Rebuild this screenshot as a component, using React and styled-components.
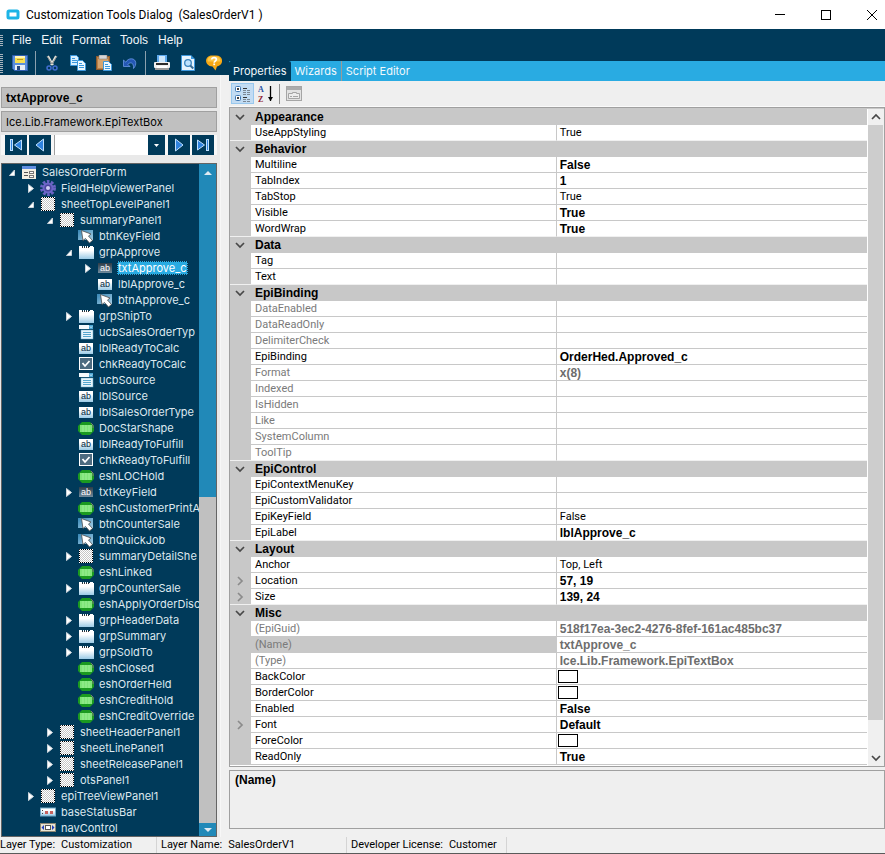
import React from 'react';
import styled, { createGlobalStyle } from 'styled-components';

const GlobalStyle = createGlobalStyle`
  * {
    box-sizing: border-box;
  }

  body {
    margin: 0;
    background: #f0f0f0;
    font-family: 'Liberation Sans', Arial, sans-serif;
    font-size: 12px;
    color: #000;
  }

  button, input, select {
    font: inherit;
    color: inherit;
    margin: 0;
    padding: 0;
    border: none;
    border-radius: 0;
    background: none;
  }

  svg {
    display: block;
    flex-shrink: 0;
  }
`;

const Window = styled.div`
  min-height: 100vh;
  display: flex;
  flex-direction: column;
`;

const TitleBar = styled.header`
  height: 29px;
  display: flex;
  align-items: center;
  background: #fff;
  padding-left: 6px;
`;

const WindowTitle = styled.h1`
  margin: 0 0 0 6px;
  flex: 1;
  font-family: Roboto, 'Open Sans', sans-serif;
  font-size: 12px;
  line-height: 16px;
  font-weight: 400;
  white-space: pre;
`;

const WindowButton = styled.button`
  width: 46px;
  height: 28px;
  display: flex;
  align-items: center;
  justify-content: center;

  &:last-child {
    width: 36px;
    justify-content: flex-end;
    padding-right: 8px;
  }
`;

const Grip = styled.span`
  width: 3px;
  height: ${({ $height }) => $height}px;
  background: repeating-linear-gradient(#a9b4bd 0 1px, #003a5a 1px 2px);
`;

const MenuBar = styled.nav`
  height: 22px;
  display: flex;
  align-items: center;
  background: #003a5a;
  color: #f2f6f9;
`;

const MenuButtons = styled.div`
  display: flex;
  margin-left: 4px;
`;

const MenuButton = styled.button`
  padding: 0 5px;
  line-height: 20px;
`;

const Body = styled.div`
  flex: 1;
  display: flex;
`;

const SideColumn = styled.div`
  width: 229px;
  flex-shrink: 0;
  display: flex;
  flex-direction: column;
`;

const ToolBar = styled.div`
  height: 24px;
  display: flex;
  align-items: center;
  background: #003a5a;
`;

const ToolButtons = styled.div`
  display: flex;
  align-items: center;
  margin-left: 4px;
`;

const ToolButton = styled.button`
  width: 26px;
  height: 22px;
  display: flex;
  align-items: center;
  justify-content: center;
`;

const ToolDivider = styled.span`
  width: 1px;
  height: 24px;
  margin: 0 3px 0 2px;
  background: #8ba0ae;
`;

const SideBody = styled.div`
  flex: 1;
  display: flex;
  background: #e9e9e9;
`;

const ControlPanel = styled.aside`
  flex: 1;
  min-width: 0;
  display: flex;
  flex-direction: column;
  padding: 12px 3px 0 1px;
`;

const Splitter = styled.div`
  width: 9px;
  background: #f0f0f0;
  border-left: 1px solid #f7f7f7;
`;

const ControlField = styled.input`
  width: 100%;
  height: 21px;
  margin-bottom: 3px;
  padding: 0 4px;
  border: 1px solid #a0a0a0;
  background: #c0c0c0;
  font-family: ${({ $strong }) => ($strong ? "'Liberation Sans'" : 'Inter')}, sans-serif;
  font-weight: ${({ $strong }) => ($strong ? 700 : 400)};
  font-size: ${({ $strong }) => ($strong ? 12 : 11)}px;
`;

const Navigator = styled.div`
  height: 20px;
  display: flex;
  gap: 2px;
  padding: 0 3px 0 4px;
  background: #f7f7f7;
`;

const NavButton = styled.button`
  width: 22px;
  height: 20px;
  display: flex;
  align-items: center;
  justify-content: center;
  background: #003a5a;
`;

const RecordPicker = styled.div`
  flex: 1;
  min-width: 0;
  display: flex;
  margin: 0 1px;
  background: #fff;
  border-left: 1px solid #a0a0a0;
`;

const RecordSelect = styled.select`
  flex: 1;
  min-width: 0;
  appearance: none;
  padding: 0 2px;
`;

const PickerButton = styled(NavButton)`
  width: 17px;
`;

const TreeFrame = styled.div`
  flex: 1;
  display: flex;
  margin-top: 8px;
  border: 1px solid #646464;
  background: #003a5a;
`;

const Tree = styled.ul`
  flex: 1;
  min-width: 0;
  margin: 0;
  padding: 0;
  list-style: none;
  overflow: hidden;
`;

const TreeItem = styled.li`
  height: 16px;
  display: flex;
  align-items: center;
  padding-left: ${({ $level }) => 5 + $level * 19}px;
  font-family: Inter, 'Liberation Sans', sans-serif;
  font-size: 11px;
  line-height: 14px;
  color: #dde8ef;
  white-space: nowrap;
`;

const Expander = styled.span`
  width: 14px;
  flex-shrink: 0;
  display: flex;
`;

const TreeLabel = styled.span`
  margin-left: 4px;
  padding: 0 1px;
  height: 14px;
  background: ${({ $selected }) => ($selected ? '#29abe2' : 'transparent')};
  outline: ${({ $selected }) => ($selected ? '1px dotted #0c2c40' : 'none')};
  outline-offset: -1px;
  color: ${({ $selected }) => ($selected ? '#fff' : 'inherit')};
`;

const TreeScroll = styled.div`
  width: 17px;
  flex-shrink: 0;
  display: flex;
  flex-direction: column;
  background: #c0c0c0;
`;

const TreeScrollButton = styled.button`
  height: ${({ $height }) => $height}px;
  display: flex;
  align-items: center;
  justify-content: center;
  background: #2189b8;
`;

const TreeThumb = styled.div`
  height: 47%;
  background: #2189b8;
`;

const TreeTrack = styled.div`
  flex: 1;
`;

const MainColumn = styled.main`
  flex: 1;
  min-width: 0;
  display: flex;
  flex-direction: column;
`;

const TabBar = styled.div`
  height: 30px;
  display: flex;
  padding-top: 10px;
  background: #003a5a;
`;

const Tabs = styled.div`
  flex: 1;
  display: flex;
  align-items: center;
  background: #29abe2;
  font-family: Inter, 'Liberation Sans', sans-serif;
  font-size: 11px;
`;

const Tab = styled.button`
  height: 20px;
  padding: 0 4px;
  color: #f2f8fc;
  background: ${({ $active }) => ($active ? '#003a5a' : 'transparent')};
  border-left: ${({ $divided }) => ($divided ? '1px solid #9b9a98' : 'none')};
  border-radius: ${({ $active }) => ($active ? '2px 2px 0 0' : '0')};
`;

const GridTools = styled.div`
  height: 26px;
  display: flex;
  align-items: center;
  padding-left: 2px;
  background: #efefef;
  border-bottom: 1px solid #fafafa;
`;

const GridToolButton = styled.button`
  width: 23px;
  height: 21px;
  display: flex;
  align-items: center;
  justify-content: center;
  background: ${({ $active }) => ($active ? '#c2dcf3' : 'transparent')};
  border: 1px solid ${({ $active }) => ($active ? '#98c8ee' : 'transparent')};
`;

const GridDivider = styled.span`
  width: 1px;
  height: 20px;
  margin: 0 2px;
  background: #8f8f8f;
`;

const GridFrame = styled.section`
  display: flex;
  padding-top: 1px;
  border: 1px solid #a0a0a0;
  background: linear-gradient(#c8c8c8 0 1px, #fff 1px);
`;

const PropertyTable = styled.table`
  flex: 1;
  min-width: 0;
  margin-bottom: 1px;
  table-layout: fixed;
  border-collapse: separate;
  border-spacing: 0;
  font-size: 11px;
  line-height: 14px;
`;

const GutterColumn = styled.col`
  width: 21px;
`;

const NameColumn = styled.col`
  width: 48%;
`;

const GutterCell = styled.td`
  height: 16px;
  padding: 0 0 0 5px;
  background: #c8c8c8;
  border-bottom: 1px solid ${({ $last }) => ($last ? '#f0f0f0' : '#c8c8c8')};
`;

const CategoryCell = styled.th`
  height: 16px;
  padding: 1px 4px 0;
  text-align: left;
  font-size: 12px;
  background: #c8c8c8;
  border-bottom: 1px solid #c8c8c8;
`;

const NameCell = styled.th`
  height: 16px;
  padding: 1px 4px 0;
  text-align: left;
  font-family: Roboto, 'Liberation Sans', sans-serif;
  font-weight: 400;
  color: ${({ $dim }) => ($dim ? '#7a7a7a' : '#000')};
  background: ${({ $selected }) => ($selected ? '#c8c8c8' : '#fff')};
  border-right: 1px solid #c8c8c8;
  border-bottom: 1px solid ${({ $last }) => ($last ? '#f0f0f0' : '#c8c8c8')};
  white-space: nowrap;
`;

const ValueCell = styled.td`
  height: 16px;
  padding: ${({ $swatch }) => ($swatch ? 0 : 1)}px 3px 0;
  font-family: ${({ $bold }) => ($bold ? "'Liberation Sans'" : 'Roboto')}, sans-serif;
  font-weight: ${({ $bold }) => ($bold ? 700 : 400)};
  font-size: ${({ $bold }) => ($bold ? 12 : 11)}px;
  color: ${({ $dim }) => ($dim ? '#6d6d6d' : '#000')};
  background: #fff;
  border-bottom: 1px solid ${({ $last }) => ($last ? '#f0f0f0' : '#c8c8c8')};
  white-space: nowrap;
`;

const Swatch = styled.span`
  display: block;
  width: 20px;
  height: 13px;
  margin-left: -2px;
  border: 1px solid #000;
  background: #fff;
`;

const GridScroll = styled.div`
  width: 16px;
  flex-shrink: 0;
  display: flex;
  flex-direction: column;
  margin-left: 1px;
  background: #f0f0f0;
`;

const GridScrollButton = styled.button`
  height: 16px;
  display: flex;
  align-items: center;
  justify-content: center;
`;

const GridThumb = styled.div`
  height: 595px;
  margin-right: 1px;
  background: #cdcdcd;
`;

const GridTrack = styled.div`
  flex: 1;
`;

const HelpPane = styled.section`
  min-height: 59px;
  margin: 3px 0 8px;
  padding: 2px 5px;
  border: 1px solid #a0a0a0;
  background: #efefef;
`;

const HelpTitle = styled.h2`
  margin: 0;
  font-size: 12px;
  line-height: 15px;
`;

const StatusBar = styled.footer`
  height: 17px;
  display: flex;
  background: #f0f0f0;
  border-bottom: 1px solid #5a5a5a;
  font-family: Roboto, 'Liberation Sans', sans-serif;
  font-size: 11px;
  line-height: 16px;
`;

const StatusItem = styled.div`
  display: flex;
  gap: 6px;
  min-width: ${({ $width }) => $width}px;
  border-right: 1px solid #d4d4d4;
  padding-left: ${({ $first }) => ($first ? 0 : 4)}px;
  white-space: nowrap;
`;

/* Toolbar icons */

const AppIcon = () => (
  <svg width="14" height="11" viewBox="0 0 14 11">
    <rect x="2" y="2" width="10" height="7" rx="1" fill="#fff" stroke="#1cb4e6" strokeWidth="3" />
  </svg>
);

const SaveIcon = () => (
  <svg width="16" height="16" viewBox="0 0 16 16">
    <path d="M0.5 0.5h15v15h-13l-2-2z" fill="#5b8fdc" stroke="#2f5fb0" />
    <rect x="3" y="1" width="10" height="7" fill="#f6df55" />
    <rect x="3" y="1" width="10" height="2" fill="#fff6b8" />
    <rect x="5" y="4" width="6" height="1" fill="#b99a20" />
    <rect x="3" y="10" width="10" height="5" fill="#e9eef7" />
    <rect x="5" y="11" width="3" height="4" fill="#24477f" />
  </svg>
);

const CutIcon = () => (
  <svg width="14" height="16" viewBox="0 0 14 16" fill="none">
    <path d="M3 1l5 9M11 1L6 10" stroke="#e4e4dc" strokeWidth="2" />
    <path d="M2 1l5 8M12 1L7 9" stroke="#8d8f8d" />
    <circle cx="4" cy="13" r="2" stroke="#3f6ed0" strokeWidth="1.5" />
    <circle cx="10" cy="13" r="2" stroke="#3f6ed0" strokeWidth="1.5" />
  </svg>
);

const CopyIcon = () => (
  <svg width="16" height="16" viewBox="0 0 16 16">
    <path d="M0.5 0.5h6l2 2v8h-8z" fill="#d8efff" stroke="#3b97dd" />
    <path d="M2 3.5h3M2 5.5h5M2 7.5h5" stroke="#3b97dd" />
    <path d="M7.5 5.5h5l3 3v7h-8z" fill="#eef8ff" stroke="#3b97dd" />
    <path d="M9 8.5h3M9 10.5h5M9 12.5h5" stroke="#3b97dd" />
  </svg>
);

const PasteIcon = () => (
  <svg width="16" height="16" viewBox="0 0 16 16">
    <rect x="0.5" y="1.5" width="13" height="13" fill="#b98048" stroke="#8d5a2c" />
    <rect x="2" y="4" width="10" height="9" fill="#d4a470" />
    <rect x="3" y="0" width="8" height="4" fill="#d7d7d7" stroke="#777" strokeWidth="0.5" />
    <path d="M7.5 6.5h5l3 3v6h-8z" fill="#eef8ff" stroke="#3b97dd" />
    <path d="M9 9.5h3M9 11.5h5M9 13.5h5" stroke="#3b97dd" />
  </svg>
);

const UndoIcon = () => (
  <svg width="14" height="13" viewBox="0 0 14 13">
    <path d="M0.5 3v6.5H7L4.8 7.300C7 5 11 5 10.500 11.500 14 8 13.500 2 8.500 1.800 6 1.700 4 3 2.800 5.200z" fill="#2457b5" stroke="#6a98e6" strokeWidth="0.8" />
  </svg>
);

const PrintIcon = () => (
  <svg width="16" height="16" viewBox="0 0 16 16">
    <path d="M3 0h10v8H3z" fill="#5ea9ec" />
    <path d="M5 1h6v7H5z" fill="#cfe8fc" />
    <rect x="0" y="7" width="16" height="6" rx="1" fill="#f0f0f0" />
    <rect x="2" y="8" width="12" height="2" fill="#2b2b2b" />
    <rect x="1" y="13" width="14" height="2" fill="#9a9a9a" />
    <rect x="3" y="11" width="10" height="2" fill="#fff" />
  </svg>
);

const PreviewIcon = () => (
  <svg width="14" height="16" viewBox="0 0 14 16">
    <path d="M0.5 0.5h9l4 4v11h-13z" fill="#e6f4ff" stroke="#3b97dd" />
    <path d="M10 0v4h4z" fill="#3b97dd" />
    <circle cx="7" cy="8" r="3.3" fill="#bfe3ff" stroke="#3a83bd" strokeWidth="1.3" />
    <path d="M9.3 10.5l3 3" stroke="#3b6f98" strokeWidth="2" />
  </svg>
);

const HelpIcon = () => (
  <svg width="16" height="16" viewBox="0 0 16 16">
    <path d="M6 0.5h4c8 0 8 10 1 11L9.5 15.500 6.500 11.500C-2 11.500-2 0.500 6 0.500z" fill="#f6a814" />
    <path d="M6 1.500h4c4 0 5 4 4 5H2c-1-2 0-5 4-5z" fill="#fcc84a" />
    <path d="M5.700 4.500c0-2.500 4.700-2.500 4.700 0 0 1.500-2.200 1.500-2.200 3.200" fill="none" stroke="#fff" strokeWidth="1.7" />
    <rect x="7.3" y="8.500" width="1.8" height="1.7" fill="#fff" />
  </svg>
);

const Arrow = ({ flip, bar }) => (
  <svg width="14" height="14" viewBox="0 0 14 14">
    <g transform={flip ? 'translate(14 0) scale(-1 1)' : undefined}>
      {bar && <rect x="1.5" y="1.5" width="2" height="11" fill="#2f83e0" stroke="#bfe0ff" />}
      <path d={bar ? 'M12.5 2v10L5.5 7z' : 'M10.5 1v12L3 7z'} fill="#2f83e0" stroke="#bfe0ff" />
    </g>
  </svg>
);

const SmallTriangle = ({ up }) => (
  <svg width="8" height="4" viewBox="0 0 8 4">
    <path d={up ? 'M0 4h8L4 0z' : 'M0 0h8L4 4z'} fill="#dfeaf2" />
  </svg>
);

const Chevron = ({ dir }) => {
  const paths = {
    down: 'M1 3l4 4 4-4',
    up: 'M1 7l4-4 4 4',
    right: 'M3 1l4 4-4 4'
  };
  return (
    <svg width="10" height="10" viewBox="0 0 10 10">
      <path d={paths[dir]} fill="none" stroke={dir === 'right' ? '#8b8b8b' : '#484848'} strokeWidth="1.7" />
    </svg>
  );
};

const CategorizedIcon = () => (
  <svg width="16" height="16" viewBox="0 0 16 16" fill="none">
    <rect x="0.5" y="0.5" width="5" height="5" rx="1" fill="#fff" stroke="#3f78b5" />
    <path d="M2 3h2M3 2v2" stroke="#000" />
    <rect x="0.5" y="9.5" width="5" height="5" rx="1" fill="#fff" stroke="#3f78b5" />
    <path d="M2 12h2M3 11v2" stroke="#000" />
    <path d="M8 2.5h4M8 11.5h4" stroke="#333" />
    <path d="M8 4.5h3M12 4.5h3M8 6.5h3M12 6.5h3M8 8.5h3M12 8.5h3M8 13.5h3M12 13.5h3M8 15.5h3M12 15.5h3" stroke="#7b8794" />
  </svg>
);

const SortIcon = () => (
  <svg width="16" height="18" viewBox="0 0 16 18">
    <text x="0" y="7" fontSize="8" fontWeight="700" fontFamily="Liberation Serif, serif" fill="#2850a4">A</text>
    <text x="0" y="17" fontSize="8" fontWeight="700" fontFamily="Liberation Serif, serif" fill="#8f2533">Z</text>
    <path d="M12.5 1v15" stroke="#000" strokeWidth="1.3" />
    <path d="M10 12h5l-2.500 4z" fill="#000" />
  </svg>
);

const PagesIcon = () => (
  <svg width="16" height="15" viewBox="0 0 16 15" fill="none">
    <rect x="0.5" y="0.5" width="15" height="14" fill="#e2e2e2" stroke="#a5a5a5" />
    <rect x="1" y="1" width="14" height="3" fill="#ababab" />
    <path d="M2.500 12.500v-5h4v-1h4v1h3v5z" fill="#ececec" stroke="#a5a5a5" />
    <path d="M4 10.500h2M7 10.500h5" stroke="#a5a5a5" />
  </svg>
);

/* Tree icons, one per control type */

const Defs = () => (
  <svg width="0" height="0" aria-hidden="true">
    <defs>
      <pattern id="checker" width="2" height="2" patternUnits="userSpaceOnUse">
        <rect width="2" height="2" fill="#fff" />
        <rect width="1" height="1" fill="#c6c6c6" />
        <rect x="1" y="1" width="1" height="1" fill="#c6c6c6" />
      </pattern>
      <linearGradient id="paper" x1="0" y1="0" x2="0" y2="1">
        <stop offset="0.3" stopColor="#fff" />
        <stop offset="1" stopColor="#9bcbe6" />
      </linearGradient>
      <linearGradient id="steel" x1="0" y1="0" x2="0" y2="1">
        <stop offset="0" stopColor="#2d3c48" />
        <stop offset="1" stopColor="#6f8b9d" />
      </linearGradient>
      <linearGradient id="sky" x1="0" y1="0" x2="1" y2="1">
        <stop offset="0" stopColor="#3585b5" />
        <stop offset="1" stopColor="#a9d0e6" />
      </linearGradient>
    </defs>
  </svg>
);

const drawings = {
  form: (
    <>
      <rect x="1" y="2" width="14" height="13" fill="#f3efe2" />
      <rect x="1" y="2" width="14" height="3" fill="#5f8de0" />
      <path d="M3 8.5h4M3 11.5h4" stroke="#555" />
      <rect x="8.5" y="7.5" width="4" height="2" fill="#fff" stroke="#777" />
      <rect x="8.5" y="11.5" width="4" height="2" fill="#fff" stroke="#777" />
    </>
  ),
  gear: (
    <>
      <circle cx="8" cy="8" r="6.5" fill="none" stroke="#6a63c4" strokeWidth="3" strokeDasharray="2.6 1.5" />
      <circle cx="8" cy="8" r="5.5" fill="#6d67c9" />
      <circle cx="8" cy="8" r="3.5" fill="#4c469e" />
      <circle cx="8" cy="8" r="2" fill="#cfcdf5" />
    </>
  ),
  panel: (
    <>
      <rect x="1" y="1" width="14" height="14" fill="url(#checker)" />
      <rect x="1.5" y="1.5" width="13" height="13" fill="none" stroke="#000" strokeDasharray="1 1" strokeDashoffset="0.5" />
    </>
  ),
  button: (
    <>
      <rect x="0" y="2" width="15" height="10" fill="url(#sky)" />
      <path d="M3.5 2.5l1.5 10 2.500-2 4 4.500 3-2.500-4-4.500 2.500-2z" fill="#fff" stroke="#4b4b4b" strokeWidth="0.8" />
    </>
  ),
  group: (
    <>
      <path d="M1 3h15v12H1z" fill="url(#paper)" />
      <path d="M1 2.500h3M5 2.500h1M7 2.500h1M9 2.500h1M12 2.500h3" stroke="#fff" />
      <path d="M4 3.500h1M6 3.500h1M8 3.500h1M10 3.500h1" stroke="#333" />
    </>
  ),
  text: (
    <>
      <rect x="1" y="3" width="14" height="10" fill="url(#steel)" />
      <text x="3" y="11" fontSize="9" fontFamily="Liberation Sans, sans-serif" fill="#fff">ab</text>
    </>
  ),
  label: (
    <>
      <rect x="1" y="3" width="14" height="11" fill="url(#paper)" />
      <text x="3" y="11" fontSize="9" fontFamily="Liberation Sans, sans-serif" fill="#06293f">ab</text>
    </>
  ),
  combo: (
    <>
      <rect x="1" y="1" width="14" height="4" fill="#f4fafd" />
      <rect x="11" y="1" width="4" height="4" fill="#4ba6d4" />
      <path d="M12 2.500l1 1 1-1" stroke="#fff" fill="none" />
      <rect x="3" y="6" width="12" height="9" fill="#e8f5fb" stroke="#65aed0" strokeWidth="0.5" />
      <path d="M5 8.500h8M5 10.500h8M5 12.500h8" stroke="#55a7ce" />
    </>
  ),
  check: (
    <>
      <rect x="1.5" y="1.5" width="13" height="12" fill="#4d6b80" stroke="#fff" />
      <path d="M4.500 7l2.500 3 4.500-5" stroke="#fff" strokeWidth="1.8" fill="none" />
    </>
  ),
  shape: (
    <>
      <path d="M4 2h8l4 4v5l-4 4H4l-4-4V6z" fill="#1b9a20" />
      <rect x="2" y="5" width="12" height="7" fill="#7de477" />
      <path d="M5 5v7M8 5v7M11 5v7" stroke="#9df096" />
      <path d="M13 3l2 2v3" stroke="#777" fill="none" />
    </>
  ),
  status: (
    <>
      <rect x="0.5" y="4" width="15" height="8" fill="url(#paper)" stroke="#6fa9c8" />
      <path d="M2.500 6v1M2.500 9v1" stroke="#444" />
      <rect x="5" y="7" width="3" height="3" fill="#c8625e" />
      <rect x="10" y="7" width="3" height="3" fill="#c8625e" />
    </>
  ),
  navigator: (
    <>
      <rect x="0.5" y="3.5" width="15" height="8" fill="#e9e4d2" stroke="#8c8774" />
      <path d="M4 5v5L1.500 7.500zM12 5v5l2.500-2.500z" fill="#1e3fc0" />
      <rect x="5.5" y="5.500" width="5" height="4" fill="#fff" stroke="#555" />
    </>
  )
};

const TreeIcon = ({ type }) => (
  <svg width="16" height="16" viewBox="0 0 16 16">{drawings[type]}</svg>
);

const ExpandMark = ({ open }) => (
  <svg width="9" height="9" viewBox="0 0 9 9">
    {open ? (
      <path d="M7.500 2v5.500h-5z" fill="#fff" stroke="#c9d3da" />
    ) : (
      <path d="M2.500 0.500v8l5-4z" fill="#fff" stroke="#c9d3da" />
    )}
  </svg>
);

const menus = ['File', 'Edit', 'Format', 'Tools', 'Help'];

const toolGroups = [
  [['Save', SaveIcon]],
  [['Cut', CutIcon], ['Copy', CopyIcon], ['Paste', PasteIcon], ['Undo', UndoIcon]],
  [['Print', PrintIcon], ['Print Preview', PreviewIcon], ['Help', HelpIcon]]
];

// level, icon, name, state of the expander
const treeItems = [
  [0, 'form', 'SalesOrderForm', 'open'],
  [1, 'gear', 'FieldHelpViewerPanel', 'closed'],
  [1, 'panel', 'sheetTopLevelPanel1', 'open'],
  [2, 'panel', 'summaryPanel1', 'open'],
  [3, 'button', 'btnKeyField'],
  [3, 'group', 'grpApprove', 'open'],
  [4, 'text', 'txtApprove_c', 'closed'],
  [4, 'label', 'lblApprove_c'],
  [4, 'button', 'btnApprove_c'],
  [3, 'group', 'grpShipTo', 'closed'],
  [3, 'combo', 'ucbSalesOrderTyp'],
  [3, 'label', 'lblReadyToCalc'],
  [3, 'check', 'chkReadyToCalc'],
  [3, 'combo', 'ucbSource'],
  [3, 'label', 'lblSource'],
  [3, 'label', 'lblSalesOrderType'],
  [3, 'shape', 'DocStarShape'],
  [3, 'label', 'lblReadyToFulfill'],
  [3, 'check', 'chkReadyToFulfill'],
  [3, 'shape', 'eshLOCHold'],
  [3, 'text', 'txtKeyField', 'closed'],
  [3, 'shape', 'eshCustomerPrintA'],
  [3, 'button', 'btnCounterSale'],
  [3, 'button', 'btnQuickJob'],
  [3, 'panel', 'summaryDetailShe', 'closed'],
  [3, 'shape', 'eshLinked'],
  [3, 'group', 'grpCounterSale', 'closed'],
  [3, 'shape', 'eshApplyOrderDisc'],
  [3, 'group', 'grpHeaderData', 'closed'],
  [3, 'group', 'grpSummary', 'closed'],
  [3, 'group', 'grpSoldTo', 'closed'],
  [3, 'shape', 'eshClosed'],
  [3, 'shape', 'eshOrderHeld'],
  [3, 'shape', 'eshCreditHold'],
  [3, 'shape', 'eshCreditOverride'],
  [2, 'panel', 'sheetHeaderPanel1', 'closed'],
  [2, 'panel', 'sheetLinePanel1', 'closed'],
  [2, 'panel', 'sheetReleasePanel1', 'closed'],
  [2, 'panel', 'otsPanel1', 'closed'],
  [1, 'panel', 'epiTreeViewPanel1', 'closed'],
  [1, 'status', 'baseStatusBar'],
  [1, 'navigator', 'navControl']
];

const categories = [
  {
    name: 'Appearance',
    rows: [{ name: 'UseAppStyling', value: 'True' }]
  },
  {
    name: 'Behavior',
    rows: [
      { name: 'Multiline', value: 'False', bold: true },
      { name: 'TabIndex', value: '1', bold: true },
      { name: 'TabStop', value: 'True' },
      { name: 'Visible', value: 'True', bold: true },
      { name: 'WordWrap', value: 'True', bold: true }
    ]
  },
  {
    name: 'Data',
    rows: [{ name: 'Tag' }, { name: 'Text' }]
  },
  {
    name: 'EpiBinding',
    rows: [
      { name: 'DataEnabled', dim: true },
      { name: 'DataReadOnly', dim: true },
      { name: 'DelimiterCheck', dim: true },
      { name: 'EpiBinding', value: 'OrderHed.Approved_c', bold: true },
      { name: 'Format', value: 'x(8)', bold: true, dim: true },
      { name: 'Indexed', dim: true },
      { name: 'IsHidden', dim: true },
      { name: 'Like', dim: true },
      { name: 'SystemColumn', dim: true },
      { name: 'ToolTip', dim: true }
    ]
  },
  {
    name: 'EpiControl',
    rows: [
      { name: 'EpiContextMenuKey' },
      { name: 'EpiCustomValidator' },
      { name: 'EpiKeyField', value: 'False' },
      { name: 'EpiLabel', value: 'lblApprove_c', bold: true }
    ]
  },
  {
    name: 'Layout',
    rows: [
      { name: 'Anchor', value: 'Top, Left' },
      { name: 'Location', value: '57, 19', bold: true, expandable: true },
      { name: 'Size', value: '139, 24', bold: true, expandable: true }
    ]
  },
  {
    name: 'Misc',
    rows: [
      { name: '(EpiGuid)', value: '518f17ea-3ec2-4276-8fef-161ac485bc37', bold: true, dim: true },
      { name: '(Name)', value: 'txtApprove_c', bold: true, dim: true, selected: true },
      { name: '(Type)', value: 'Ice.Lib.Framework.EpiTextBox', bold: true, dim: true },
      { name: 'BackColor', swatch: true },
      { name: 'BorderColor', swatch: true },
      { name: 'Enabled', value: 'False', bold: true },
      { name: 'Font', value: 'Default', bold: true, expandable: true },
      { name: 'ForeColor', swatch: true },
      { name: 'ReadOnly', value: 'True', bold: true }
    ]
  }
];

const PropertyRow = ({ row, last }) => (
  <tr>
    <GutterCell $last={last}>{row.expandable && <Chevron dir="right" />}</GutterCell>
    <NameCell scope="row" $dim={row.dim} $selected={row.selected} $last={last}>
      {row.name}
    </NameCell>
    <ValueCell $bold={row.bold} $dim={row.dim} $swatch={row.swatch} $last={last}>
      {row.swatch ? <Swatch /> : row.value}
    </ValueCell>
  </tr>
);

const PropertyGrid = () => (
  <GridFrame>
    <PropertyTable>
      <colgroup>
        <GutterColumn />
        <NameColumn />
        <col />
      </colgroup>
      {categories.map((category, index) => (
        <tbody key={category.name}>
          <tr>
            <GutterCell><Chevron dir="down" /></GutterCell>
            <CategoryCell colSpan={2}>{category.name}</CategoryCell>
          </tr>
          {category.rows.map((row, i) => (
            <PropertyRow
              key={row.name}
              row={row}
              last={i === category.rows.length - 1 && index < categories.length - 1}
            />
          ))}
        </tbody>
      ))}
    </PropertyTable>
    <GridScroll>
      <GridScrollButton aria-label="Scroll up"><Chevron dir="up" /></GridScrollButton>
      <GridThumb />
      <GridTrack />
      <GridScrollButton aria-label="Scroll down"><Chevron dir="down" /></GridScrollButton>
    </GridScroll>
  </GridFrame>
);

const ControlTree = () => (
  <TreeFrame>
    <Tree>
      {treeItems.map(([level, icon, name, state]) => (
        <TreeItem key={name} $level={level}>
          <Expander>{state && <ExpandMark open={state === 'open'} />}</Expander>
          <TreeIcon type={icon} />
          <TreeLabel $selected={name === 'txtApprove_c'}>{name}</TreeLabel>
        </TreeItem>
      ))}
    </Tree>
    <TreeScroll>
      <TreeScrollButton $height={17} aria-label="Scroll up"><SmallTriangle up /></TreeScrollButton>
      <TreeThumb />
      <TreeTrack />
      <TreeScrollButton $height={13} aria-label="Scroll down"><SmallTriangle /></TreeScrollButton>
    </TreeScroll>
  </TreeFrame>
);

const App = () => (
  <Window>
    <GlobalStyle />
    <TitleBar>
      <AppIcon />
      <WindowTitle>{'Customization Tools Dialog  (SalesOrderV1 )'}</WindowTitle>
      <WindowButton aria-label="Minimize">
        <svg width="10" height="10" viewBox="0 0 10 10"><path d="M0 4.500h10" stroke="#000" /></svg>
      </WindowButton>
      <WindowButton aria-label="Maximize">
        <svg width="10" height="10" viewBox="0 0 10 10"><rect x="0.5" y="0.5" width="9" height="9" fill="none" stroke="#000" /></svg>
      </WindowButton>
      <WindowButton aria-label="Close">
        <svg width="10" height="10" viewBox="0 0 10 10"><path d="M0 0l10 10M10 0L0 10" stroke="#000" /></svg>
      </WindowButton>
    </TitleBar>
    <MenuBar>
      <Grip $height={11} />
      <MenuButtons>
        {menus.map(menu => <MenuButton key={menu}>{menu}</MenuButton>)}
      </MenuButtons>
    </MenuBar>
    <Body>
      <SideColumn>
        <ToolBar>
          <Grip $height={19} />
          <ToolButtons>
            {toolGroups.map((group, index) => (
              <React.Fragment key={index}>
                {index > 0 && <ToolDivider />}
                {group.map(([label, Icon]) => (
                  <ToolButton key={label} aria-label={label}><Icon /></ToolButton>
                ))}
              </React.Fragment>
            ))}
          </ToolButtons>
        </ToolBar>
        <SideBody>
          <ControlPanel>
            <ControlField $strong readOnly aria-label="Control name" defaultValue="txtApprove_c" />
            <ControlField readOnly aria-label="Control type" defaultValue="Ice.Lib.Framework.EpiTextBox" />
            <Navigator>
              <NavButton aria-label="First"><Arrow bar /></NavButton>
              <NavButton aria-label="Previous"><Arrow /></NavButton>
              <RecordPicker>
                <RecordSelect aria-label="Control"><option value="" /></RecordSelect>
                <PickerButton aria-label="Open list">
                  <svg width="5" height="3" viewBox="0 0 5 3"><path d="M0 0h5L2.500 3z" fill="#fff" /></svg>
                </PickerButton>
              </RecordPicker>
              <NavButton aria-label="Next"><Arrow flip /></NavButton>
              <NavButton aria-label="Last"><Arrow flip bar /></NavButton>
            </Navigator>
            <ControlTree />
          </ControlPanel>
          <Splitter />
        </SideBody>
      </SideColumn>
      <MainColumn>
        <TabBar>
          <Tabs>
            <Tab $active>Properties</Tab>
            <Tab>Wizards</Tab>
            <Tab $divided>Script Editor</Tab>
          </Tabs>
        </TabBar>
        <GridTools>
          <GridToolButton $active aria-label="Categorized"><CategorizedIcon /></GridToolButton>
          <GridToolButton aria-label="Alphabetical"><SortIcon /></GridToolButton>
          <GridDivider />
          <GridToolButton disabled aria-label="Property pages"><PagesIcon /></GridToolButton>
        </GridTools>
        <PropertyGrid />
        <HelpPane>
          <HelpTitle>(Name)</HelpTitle>
        </HelpPane>
      </MainColumn>
    </Body>
    <StatusBar>
      <StatusItem $first $width={157}><span>Layer Type:</span><span>Customization</span></StatusItem>
      <StatusItem $width={190}><span>Layer Name:</span><span>SalesOrderV1</span></StatusItem>
      <StatusItem $width={160}><span>Developer License:</span><span>Customer</span></StatusItem>
    </StatusBar>
    <Defs />
  </Window>
);

export default App;
